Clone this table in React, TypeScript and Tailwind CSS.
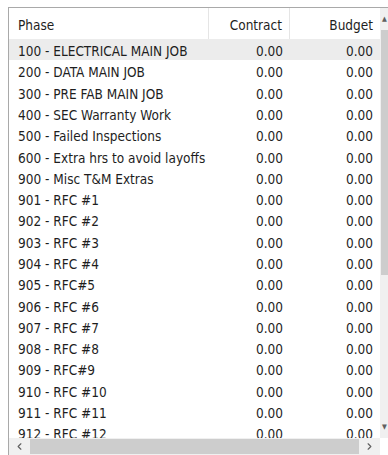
import { ChevronLeft, ChevronRight } from 'lucide-react'

const rows = [
  '100 - ELECTRICAL MAIN JOB',
  '200 - DATA MAIN JOB',
  '300 - PRE FAB MAIN JOB',
  '400 - SEC Warranty Work',
  '500 - Failed Inspections',
  '600 - Extra hrs to avoid layoffs',
  '900 - Misc T&M Extras',
  '901 - RFC #1',
  '902 - RFC #2',
  '903 - RFC #3',
  '904 - RFC #4',
  '905 - RFC#5',
  '906 - RFC #6',
  '907 - RFC #7',
  '908 - RFC #8',
  '909 - RFC#9',
  '910 - RFC #10',
  '911 - RFC #11',
  '912 - RFC #12',
  '913 - RFC #13',
]

export default function App() {
  return (
    <div
      className="w-[388px] h-[455px] overflow-hidden bg-white pl-[8px] pt-[7px] text-[13.5px] text-[#1e1e1e]"
      style={{ fontFamily: '"DejaVu Sans Condensed", "DejaVu Sans", sans-serif' }}
    >
      <div className="w-[400px] h-[448px] border-l border-t border-[#a9a9a9] flex">
        {/* grid + horizontal bar */}
        <div className="w-[371px] flex flex-col">
          <div className="flex-1 overflow-hidden">
            <div className="flex h-[31px] items-center bg-white">
              <div className="w-[200px] h-full flex items-center pl-[9px] pt-[4px] border-r border-[#e5e5e5]">Phase</div>
              <div className="w-[81px] h-full flex items-center justify-end pr-[7px] pt-[4px] border-r border-[#e5e5e5]">Contract</div>
              <div className="w-[90px] h-full flex items-center justify-end pr-[7px] pt-[4px]">Budget</div>
            </div>
            {rows.map((r, i) => (
              <div key={r} className={`flex h-[21.3px] items-center pt-[3px] ${i === 0 ? 'bg-[#ececec]' : ''}`}>
                <div className="w-[200px] pl-[9px] whitespace-nowrap">{r}</div>
                <div className="w-[81px] text-right pr-[7px]">0.00</div>
                <div className="w-[90px] text-right pr-[7px]">0.00</div>
              </div>
            ))}
          </div>
          <div className="h-[17px] shrink-0 flex items-center bg-[#f0f0f0]">
            <div className="w-[21px] h-full flex items-center justify-center">
              <ChevronLeft size={11} strokeWidth={2.5} color="#606060" />
            </div>
            <div className="flex-1 h-full py-[1px]">
              <div className="w-full h-full bg-[#cdcdcd]" />
            </div>
            <div className="w-[21px] h-full flex items-center justify-center">
              <ChevronRight size={11} strokeWidth={2.5} color="#606060" />
            </div>
          </div>
        </div>
        {/* vertical bar */}
        <div className="w-[17px] h-[430px] bg-[#f0f0f0] flex flex-col items-start">
          <div className="h-[22px] w-full flex items-center pl-[2px] text-[#606060] text-[7px]">▲</div>
          <div className="ml-[1px] w-[13px] h-[245px] bg-[#cdcdcd]" />
          <div className="flex-1" />
          <div className="h-[22px] w-full flex items-center pl-[2px] text-[#606060] text-[7px]">▼</div>
        </div>
      </div>
    </div>
  )
}
